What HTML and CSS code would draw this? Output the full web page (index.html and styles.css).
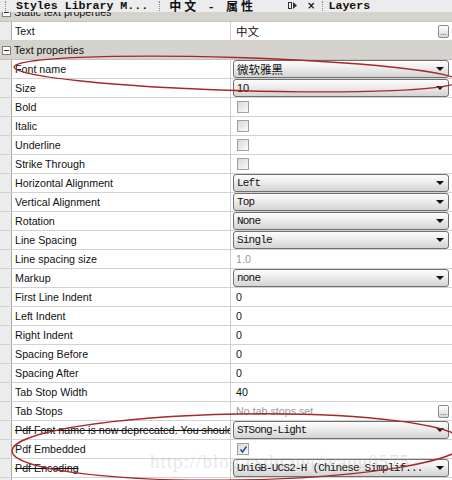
FILE: index.html
```html
<!DOCTYPE html>
<html>
<head>
<meta charset="utf-8">
<link rel="stylesheet" href="styles.css">
</head>
<body>
<div class="page">
  <div class="tabs">
    <span class="grip"></span>
    <span class="tab mono-b">Styles Library M...</span>
    <span class="grip g2"></span>
    <span class="tab cjk-b">中文 - 属性</span>
    <span class="tab-icons">
      <svg width="10" height="9" viewBox="0 0 10 9"><rect x="0.5" y="1.5" width="3" height="6" fill="none" stroke="#333"/><path d="M5 1 L9 4.5 L5 8 Z" fill="#333"/></svg>
      <span class="x">×</span>
    </span>
    <span class="grip g3"></span>
    <span class="tab mono-b last">Layers</span>
  </div>
  <div class="viewport">
    <div class="list">
      <div class="group"><span class="tog"></span>Static text properties</div>
      <div class="row"><div class="gut"></div><div class="lbl">Text</div><div class="val"><span class="cjk">中文</span><span class="btn">...</span></div></div>
      <div class="group"><span class="tog"></span>Text properties</div>
      <div class="row"><div class="gut"></div><div class="lbl">Font name</div><div class="val"><div class="dd sans"><span class="cjk">微软雅黑</span><i class="arr"></i></div></div></div>
      <div class="row"><div class="gut"></div><div class="lbl">Size</div><div class="val"><div class="dd sans"><span>10</span><i class="arr"></i></div></div></div>
      <div class="row"><div class="gut"></div><div class="lbl">Bold</div><div class="val"><span class="cb"></span></div></div>
      <div class="row"><div class="gut"></div><div class="lbl">Italic</div><div class="val"><span class="cb"></span></div></div>
      <div class="row"><div class="gut"></div><div class="lbl">Underline</div><div class="val"><span class="cb"></span></div></div>
      <div class="row"><div class="gut"></div><div class="lbl">Strike Through</div><div class="val"><span class="cb"></span></div></div>
      <div class="row"><div class="gut"></div><div class="lbl">Horizontal Alignment</div><div class="val"><div class="dd"><span>Left</span><i class="arr"></i></div></div></div>
      <div class="row"><div class="gut"></div><div class="lbl">Vertical Alignment</div><div class="val"><div class="dd"><span>Top</span><i class="arr"></i></div></div></div>
      <div class="row"><div class="gut"></div><div class="lbl">Rotation</div><div class="val"><div class="dd"><span>None</span><i class="arr"></i></div></div></div>
      <div class="row"><div class="gut"></div><div class="lbl">Line Spacing</div><div class="val"><div class="dd"><span>Single</span><i class="arr"></i></div></div></div>
      <div class="row"><div class="gut"></div><div class="lbl">Line spacing size</div><div class="val"><span class="dim">1.0</span></div></div>
      <div class="row"><div class="gut"></div><div class="lbl">Markup</div><div class="val"><div class="dd"><span>none</span><i class="arr"></i></div></div></div>
      <div class="row"><div class="gut"></div><div class="lbl">First Line Indent</div><div class="val"><span>0</span></div></div>
      <div class="row"><div class="gut"></div><div class="lbl">Left Indent</div><div class="val"><span>0</span></div></div>
      <div class="row"><div class="gut"></div><div class="lbl">Right Indent</div><div class="val"><span>0</span></div></div>
      <div class="row"><div class="gut"></div><div class="lbl">Spacing Before</div><div class="val"><span>0</span></div></div>
      <div class="row"><div class="gut"></div><div class="lbl">Spacing After</div><div class="val"><span>0</span></div></div>
      <div class="row"><div class="gut"></div><div class="lbl">Tab Stop Width</div><div class="val"><span>40</span></div></div>
      <div class="row"><div class="gut"></div><div class="lbl">Tab Stops</div><div class="val"><span class="dim">No tab stops set</span><span class="btn">...</span></div></div>
      <div class="row"><div class="gut"></div><div class="lbl strike">Pdf Font name is now deprecated. You should use font extensions.</div><div class="val"><div class="dd"><span>STSong-Light</span><i class="arr"></i></div></div></div>
      <div class="row"><div class="gut"></div><div class="lbl">Pdf Embedded</div><div class="val"><span class="cb on"><svg width="9" height="9" viewBox="0 0 9 9"><path d="M1.5 4.5 L3.5 7 L7.5 1.5" fill="none" stroke="#2a4fa0" stroke-width="1.6"/></svg></span></div></div>
      <div class="row"><div class="gut"></div><div class="lbl strike">Pdf Encoding</div><div class="val"><div class="dd"><span>UniGB-UCS2-H (Chinese Simplif...</span><i class="arr"></i></div></div></div>
      <div class="row"><div class="gut"></div><div class="lbl"></div><div class="val"></div></div>
    </div>
  </div>
  <div class="watermark">http://blog.csdn.net/wang0575</div>
  <svg class="marks" width="452" height="480" viewBox="0 0 452 480">
    <ellipse cx="236" cy="74" rx="222" ry="16.5" transform="rotate(1.8 236 74)" fill="none" stroke="#a82828" stroke-width="1.3"/>
    <ellipse cx="238" cy="447" rx="226" ry="33" transform="rotate(-1 238 447)" fill="none" stroke="#a82828" stroke-width="1.3"/>
  </svg>
</div>
</body>
</html>
```

FILE: styles.css
```css
html, body {
  margin: 0;
  padding: 0;
  background: #ffffff;
}
.page {
  position: relative;
  width: 452px;
  height: 480px;
  overflow: hidden;
  font-family: "Liberation Sans", Arial, sans-serif;
  font-size: 10.7px;
  color: #111;
}
.tabs {
  height: 12px;
  background: #ececec;
  display: flex;
  align-items: flex-start;
  overflow: hidden;
  position: relative;
  z-index: 1;
}
.grip {
  width: 2px;
  height: 10px;
  margin: 1px 0 0 5px;
  border-left: 1px dotted #888;
}
.grip.g2 { margin-left: 11px; }
.grip.g3 { margin-left: 7px; }
.tab {
  line-height: 14px;
  margin-top: -1px;
  white-space: nowrap;
}
.mono-b {
  font-family: "Liberation Mono", "Courier New", monospace;
  font-weight: bold;
  font-size: 11.6px;
  margin-left: 8px;
}
.mono-b.last {
  margin-left: 3px;
}
.cjk-b {
  font-family: "Noto Sans CJK SC", sans-serif;
  font-weight: bold;
  font-size: 12px;
  margin-left: 7px;
  letter-spacing: 3px;
  word-spacing: 4px;
}
.tab-icons {
  display: flex;
  align-items: center;
  gap: 9px;
  margin-left: 32px;
  height: 11px;
}
.tab-icons .x {
  font-family: "DejaVu Sans", sans-serif;
  font-weight: bold;
  font-size: 10px;
  line-height: 11px;
}
.viewport {
  height: 468px;
  overflow: hidden;
}
.list {
  margin-top: -9px;
}
.group {
  height: 18px;
  border-bottom: 1px solid #c4c1bb;
  background: #d6d3ce;
  display: flex;
  align-items: center;
  white-space: nowrap;
}
.tog {
  width: 7px;
  height: 7px;
  border: 1px solid #808080;
  background: #fff;
  margin: 0 3px 0 2px;
  position: relative;
}
.tog::after {
  content: "";
  position: absolute;
  left: 1px;
  top: 3px;
  width: 5px;
  height: 1px;
  background: #333;
}
.row {
  display: flex;
  height: 18px;
  border-bottom: 1px solid #d2d2d2;
}
.gut {
  width: 11px;
  flex: none;
  background: #ececec;
  border-right: 1px solid #a9a9a9;
}
.lbl {
  width: 215px;
  flex: none;
  padding-left: 3px;
  border-right: 1px solid #cfcfcf;
  white-space: nowrap;
  overflow: hidden;
  line-height: 18px;
}
.strike {
  text-decoration: line-through;
}
.val {
  flex: 1;
  display: flex;
  align-items: center;
  padding-left: 5px;
  position: relative;
  white-space: nowrap;
}
.cjk {
  font-family: "Noto Sans CJK SC", sans-serif;
  font-size: 11.5px;
}
.dim {
  color: #9a9a9a;
}
.btn {
  margin-left: auto;
  margin-right: 3px;
  width: 9px;
  height: 11px;
  border: 1px solid #8a8a8a;
  border-radius: 2px;
  background: linear-gradient(#ffffff, #d8d8d8);
  font-size: 8px;
  line-height: 14px;
  text-align: center;
  color: #333;
  overflow: hidden;
}
.dd {
  flex: 1;
  height: 18px;
  box-sizing: border-box;
  margin: 0 3px 0 -3px;
  border: 1px solid #707070;
  border-radius: 3px;
  background: linear-gradient(#fdfdfd, #ececec 45%, #d3d3d3);
  display: flex;
  align-items: center;
  padding-left: 3px;
  font-family: "Liberation Mono", "Courier New", monospace;
  font-size: 11px;
  letter-spacing: -0.8px;
  color: #111;
}
.dd.sans {
  font-family: "Liberation Sans", Arial, sans-serif;
  font-size: 11px;
  letter-spacing: 0;
}
.arr {
  margin-left: auto;
  margin-right: 4px;
  width: 0;
  height: 0;
  border-left: 4px solid transparent;
  border-right: 4px solid transparent;
  border-top: 4px solid #111;
}
.cb {
  width: 10px;
  height: 10px;
  margin-left: 1px;
  border: 1px solid #a0a0a0;
  background: linear-gradient(135deg, #d8d8d8, #fafafa);
  display: flex;
  align-items: center;
  justify-content: center;
}
.watermark {
  position: absolute;
  left: 150px;
  top: 451px;
  font-family: "Liberation Serif", serif;
  font-size: 19px;
  color: rgba(170, 170, 170, 0.3);
  letter-spacing: 1px;
  white-space: nowrap;
}
.marks {
  position: absolute;
  left: 0;
  top: 0;
  pointer-events: none;
}
```
